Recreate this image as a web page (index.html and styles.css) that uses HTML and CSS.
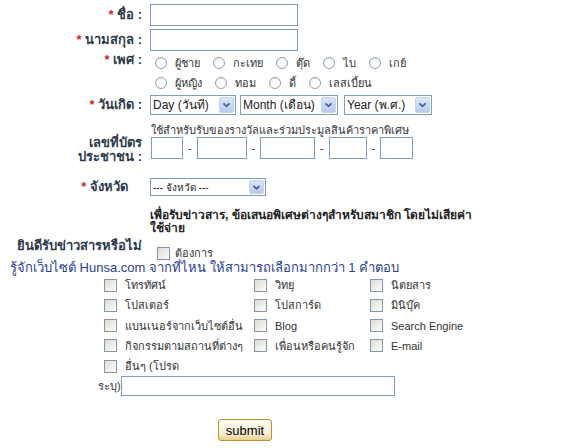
FILE: index.html
```html
<!DOCTYPE html>
<html lang="th">
<head>
<meta charset="utf-8">
<title>Register</title>
<link rel="stylesheet" href="styles.css">
</head>
<body>
<form class="form">
  <div class="row r-name">
    <label class="lbl"><span class="req">*</span> ชื่อ :</label>
    <div class="field"><input class="text w-name" type="text"></div>
  </div>
  <div class="row r-sur">
    <label class="lbl"><span class="req">*</span> นามสกุล :</label>
    <div class="field"><input class="text w-name" type="text"></div>
  </div>
  <div class="row r-sex">
    <label class="lbl lbl-top"><span class="req">*</span> เพศ :</label>
    <div class="field radios">
      <div class="rline">
        <label class="opt"><input type="radio" name="sex" class="radio"><span>ผู้ชาย</span></label>
        <label class="opt"><input type="radio" name="sex" class="radio"><span>กะเทย</span></label>
        <label class="opt"><input type="radio" name="sex" class="radio"><span>ตุ๊ด</span></label>
        <label class="opt"><input type="radio" name="sex" class="radio"><span>ไบ</span></label>
        <label class="opt"><input type="radio" name="sex" class="radio"><span>เกย์</span></label>
      </div>
      <div class="rline">
        <label class="opt"><input type="radio" name="sex" class="radio"><span>ผู้หญิง</span></label>
        <label class="opt"><input type="radio" name="sex" class="radio"><span>ทอม</span></label>
        <label class="opt"><input type="radio" name="sex" class="radio"><span>ดี้</span></label>
        <label class="opt"><input type="radio" name="sex" class="radio"><span>เลสเบี้ยน</span></label>
      </div>
    </div>
  </div>
  <div class="row r-birth">
    <label class="lbl"><span class="req">*</span> วันเกิด :</label>
    <div class="field selects">
      <span class="sel w-day"><select><option>Day (วันที่)</option></select><span class="arrow"><svg width="15" height="16" viewBox="0 0 15 16"><path d="M4 6 L7.5 9.5 L11 6" fill="none" stroke="#4d6185" stroke-width="2"/></svg></span></span>
      <span class="sel w-month"><select><option>Month (เดือน)</option></select><span class="arrow"><svg width="15" height="16" viewBox="0 0 15 16"><path d="M4 6 L7.5 9.5 L11 6" fill="none" stroke="#4d6185" stroke-width="2"/></svg></span></span>
      <span class="sel w-year"><select><option>Year (พ.ศ.)</option></select><span class="arrow"><svg width="15" height="16" viewBox="0 0 15 16"><path d="M4 6 L7.5 9.5 L11 6" fill="none" stroke="#4d6185" stroke-width="2"/></svg></span></span>
    </div>
  </div>
  <div class="row r-id">
    <label class="lbl lbl-id">เลขที่บัตร<br>ประชาชน :</label>
    <div class="field">
      <div class="caption">ใช้สำหรับรับของรางวัลและร่วมประมูลสินค้าราคาพิเศษ</div>
      <div class="idline">
        <input class="text id1" type="text"><span class="dash">-</span><input class="text id2" type="text"><span class="dash">-</span><input class="text id3" type="text"><span class="dash">-</span><input class="text id4" type="text"><span class="dash">-</span><input class="text id5" type="text">
      </div>
    </div>
  </div>
  <div class="row r-prov">
    <label class="lbl lbl-prov"><span class="req">*</span> จังหวัด</label>
    <div class="field">
      <span class="sel w-prov"><select><option>--- จังหวัด ---</option></select><span class="arrow"><svg width="15" height="15" viewBox="0 0 15 15"><path d="M4 5.5 L7.5 9 L11 5.5" fill="none" stroke="#4d6185" stroke-width="2"/></svg></span></span>
    </div>
  </div>
  <div class="row r-info">
    <span></span>
    <div class="field info">เพื่อรับข่าวสาร, ข้อเสนอพิเศษต่างๆสำหรับสมาชิก โดยไม่เสียค่า ใช้จ่าย</div>
  </div>
  <div class="row r-news">
    <label class="lbl lbl-news">ยินดีรับข่าวสารหรือไม่</label>
    <div class="field news"><input type="checkbox" class="check"><span>ต้องการ</span></div>
  </div>
  <div class="heading">รู้จักเว็บไซต์ Hunsa.com จากที่ไหน ให้สามารถเลือกมากกว่า 1 คำตอบ</div>
  <div class="sources">
    <label class="src"><input type="checkbox" class="check"><span>โทรทัศน์</span></label>
    <label class="src"><input type="checkbox" class="check"><span>วิทยุ</span></label>
    <label class="src"><input type="checkbox" class="check"><span>นิตยสาร</span></label>
    <label class="src"><input type="checkbox" class="check"><span>โปสเตอร์</span></label>
    <label class="src"><input type="checkbox" class="check"><span>โปสการ์ด</span></label>
    <label class="src"><input type="checkbox" class="check"><span>มินิบุ๊ค</span></label>
    <label class="src"><input type="checkbox" class="check"><span>แบนเนอร์จากเว็บไซต์อื่น</span></label>
    <label class="src"><input type="checkbox" class="check"><span>Blog</span></label>
    <label class="src"><input type="checkbox" class="check"><span>Search Engine</span></label>
    <label class="src"><input type="checkbox" class="check"><span>กิจกรรมตามสถานที่ต่างๆ</span></label>
    <label class="src"><input type="checkbox" class="check"><span>เพื่อนหรือคนรู้จัก</span></label>
    <label class="src"><input type="checkbox" class="check"><span>E-mail</span></label>
    <label class="src"><input type="checkbox" class="check"><span>อื่นๆ (โปรด</span></label>
  </div>
  <div class="other"><span>ระบุ)</span><input class="text w-other" type="text"></div>
  <div class="actions"><button type="button" class="submit">submit</button></div>
</form>
</body>
</html>
```
FILE: styles.css
```css
* { box-sizing: border-box; }
html, body { margin: 0; padding: 0; background: #fff; }
body {
  font-family: Tahoma, "Liberation Sans", "DejaVu Sans", sans-serif;
  font-size: 11px;
  color: #333;
}
.form { padding-top: 4px; width: 584px; }
.row {
  display: grid;
  grid-template-columns: 142px 1fr;
  column-gap: 8px;
  align-items: center;
}
.lbl {
  text-align: right;
  font-weight: bold;
  font-size: 13px;
  line-height: 14px;
  color: #2c3a4c;
  white-space: nowrap;
}
.req { color: #d0262c; }
.field { min-width: 0; }

.text {
  display: block;
  height: 22px;
  border: 1px solid #7f9db9;
  background: #fff;
  margin: 0;
  padding: 0 3px;
  font: inherit;
}
.w-name { width: 148px; }
.r-name { height: 22px; }
.r-sur { margin-top: 3px; height: 22px; }

.r-sex { margin-top: 2px; height: 40px; }
.lbl-top { align-self: start; }
.radios { display: flex; flex-direction: column; }
.rline { display: flex; height: 20px; align-items: center; }
.opt { display: inline-flex; align-items: center; margin-right: 8px; color: #333; }
.radio {
  appearance: none;
  -webkit-appearance: none;
  width: 12px; height: 12px;
  margin: 0 8px 0 5px;
  border: 1px solid #8f9fb2;
  border-radius: 50%;
  background: radial-gradient(circle at 60% 65%, #fff 40%, #e6e6df 100%);
}

.r-birth { margin-top: 2px; height: 20px; }
.selects { display: flex; gap: 4px; }
.sel {
  position: relative;
  display: inline-block;
  height: 20px;
  border: 1px solid #7f9db9;
  background: #fff;
}
.sel select {
  appearance: none;
  -webkit-appearance: none;
  display: block;
  border: 0;
  background: transparent;
  height: 18px;
  width: 100%;
  padding: 0 18px 0 2px;
  font-family: Tahoma, "Liberation Sans", "DejaVu Sans", sans-serif;
  font-size: 12px;
  color: #222;
  outline: none;
}
.sel .arrow {
  position: absolute;
  right: 1px; top: 1px;
  width: 15px; height: 16px;
  border-radius: 2px;
  background: linear-gradient(#dbe6fb, #b7cbf2);
  border: 1px solid #c3d3f3;
  display: flex; align-items: center; justify-content: center;
}
.sel .arrow svg { display: block; }
.w-day { width: 86px; }
.w-month { width: 98px; }
.w-year { width: 88px; margin-left: 2px; }

.r-id { margin-top: 8px; height: 36px; }
.caption { font-size: 11px; color: #333; line-height: 14px; height: 14px; padding-left: 1px; }
.idline { display: flex; align-items: center; }
.idline .text { height: 22px; }
.id1 { width: 32px; margin-left: 1px; }
.id2 { width: 50px; }
.id3 { width: 55px; }
.id4 { width: 38px; }
.id5 { width: 33px; }
.dash { width: 13.5px; text-align: center; color: #333; }
.lbl-id { align-self: start; padding-top: 13px; margin-bottom: -6px; }

.r-prov { margin-top: 19px; height: 18px; }
.lbl-prov { padding-right: 14px; }
.w-prov { width: 116px; height: 18px; }
.w-prov select { height: 16px; font-size: 10px; }
.w-prov .arrow { height: 14px; top: 1px; }

.r-info { margin-top: 13px; height: 23px; align-items: start; }
.info {
  font-weight: bold;
  font-size: 12px;
  color: #222;
  line-height: 13px;
  width: 330px;
  white-space: normal;
}

.r-news { margin-top: 7px; align-items: start; height: 20px; }
.news { display: flex; align-items: center; padding-top: 7px; padding-left: 7px; }
.check {
  appearance: none;
  -webkit-appearance: none;
  width: 13px; height: 13px;
  margin: 0;
  border: 1px solid #8596a8;
  background: linear-gradient(135deg, #dcdcd4, #fdfdfb);
  flex: none;
}
.news span { margin-left: 5px; line-height: 14px; }

.heading {
  margin-top: 2px;
  padding-left: 10px;
  color: #1f3f93;
  font-size: 13px;
  line-height: 14px;
  height: 14px;
  white-space: nowrap;
}

.sources {
  display: grid;
  grid-template-columns: 150px 116px 1fr;
  grid-auto-rows: 20.25px;
  padding-left: 104px;
}
.src { display: flex; align-items: center; color: #333; white-space: nowrap; }
.src span { margin-left: 8px; }

.other { display: flex; align-items: center; padding-left: 98px; height: 20px; }
.other span { color: #333; width: 23px; }
.w-other { width: 274px; height: 20px; }

.actions { padding-left: 218px; margin-top: 23px; }
.submit {
  display: block;
  width: 54px; height: 22px;
  padding: 0;
  border: 1px solid #b8913a;
  border-radius: 3px;
  background: linear-gradient(#fffdf4, #f6ecd0 70%, #e8cf8e);
  font-family: "Liberation Sans", Arial, sans-serif;
  font-size: 13px;
  color: #000;
}
```
